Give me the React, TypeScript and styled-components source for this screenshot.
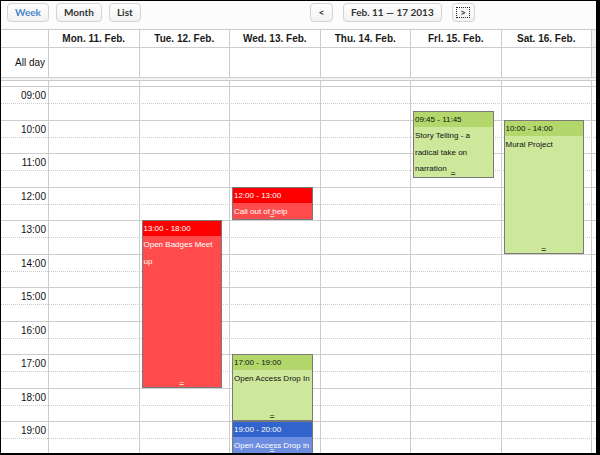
import React from 'react';
import styled, { createGlobalStyle } from 'styled-components';

const GlobalStyle = createGlobalStyle`
  html, body { margin: 0; padding: 0; background: #fff; }
  body { font-family: "Liberation Sans", Arial, sans-serif; }
`;

const COLS = '48px repeat(6, 1fr) 4px';
const HOUR = 33.5;
const OFFSET = 5;
const FIRST = 9;
const LINE = '#cccccc';

const yOf = (h: number) => Math.round(OFFSET + (h - FIRST) * HOUR);

type Tone = 'red' | 'green' | 'blue';
const tones: Record<Tone, { head: string; body: string; fg: string }> = {
  red: { head: '#ff0000', body: '#ff4b4b', fg: '#ffffff' },
  green: { head: '#b3d76b', body: '#cde79b', fg: '#111111' },
  blue: { head: '#3164cc', body: '#6d8de0', fg: '#ffffff' },
};

const days = ['Mon. 11. Feb.', 'Tue. 12. Feb.', 'Wed. 13. Feb.', 'Thu. 14. Feb.', 'Frl. 15. Feb.', 'Sat. 16. Feb.'];

type Ev = { day: number; start: number; end: number; time: string; title: string; tone: Tone };
const events: Ev[] = [
  { day: 1, start: 13, end: 18, time: '13:00 - 18:00', title: 'Open Badges Meet up', tone: 'red' },
  { day: 2, start: 12, end: 13, time: '12:00 - 13:00', title: 'Call out of help', tone: 'red' },
  { day: 2, start: 17, end: 19, time: '17:00 - 19:00', title: 'Open Access Drop In', tone: 'green' },
  { day: 2, start: 19, end: 20, time: '19:00 - 20:00', title: 'Open Access Drop in', tone: 'blue' },
  { day: 4, start: 9.75, end: 11.75, time: '09:45 - 11:45', title: 'Story Telling - a radical take on narration', tone: 'green' },
  { day: 5, start: 10, end: 14, time: '10:00 - 14:00', title: 'Mural Project', tone: 'green' },
];

const hours = [9, 10, 11, 12, 13, 14, 15, 16, 17, 18, 19, 20];

const Frame = styled.div`
  width: 600px;
  height: 455px;
  box-sizing: border-box;
  border-style: solid;
  border-color: #000;
  border-width: 1px 4px 2px 1px;
  background: #fff;
  display: flex;
  flex-direction: column;
  overflow: hidden;
`;

const Toolbar = styled.div`
  height: 28px;
  flex: none;
  box-sizing: border-box;
  padding: 2px 0 0 6px;
  display: flex;
  align-items: flex-start;
  background: #fcfcfc;
`;

const ViewGroup = styled.div`
  width: 303px;
  flex: none;
  display: flex;
  gap: 7px;
`;

const NavGroup = styled.div`
  display: flex;
  gap: 10px;
`;

const Button = styled.button<{ $active?: boolean; $w?: number }>`
  height: 19px;
  box-sizing: border-box;
  ${(p) => (p.$w ? `width: ${p.$w}px; padding: 0;` : 'padding: 0 7px;')}
  margin: 0;
  border: 1px solid #d4d4d4;
  border-radius: 4px;
  background: linear-gradient(#ffffff, #f2f2f2);
  font-family: "Lato", "Liberation Sans", sans-serif;
  font-weight: 700;
  font-size: 10px;
  line-height: 17px;
  color: ${(p) => (p.$active ? '#4a85c9' : '#333333')};
  display: flex;
  align-items: center;
  justify-content: center;
`;

const FocusRing = styled.span`
  display: flex;
  align-items: center;
  justify-content: center;
  width: 14px;
  height: 11px;
  border: 1px dotted #222;
  box-sizing: border-box;
  font-size: 10px;
`;

const HeaderRow = styled.div`
  flex: none;
  display: grid;
  grid-template-columns: ${COLS};
  height: 19px;
  box-sizing: border-box;
  border-top: 1px solid ${LINE};
  border-bottom: 1px solid ${LINE};
`;

const HeadCell = styled.div`
  border-right: 1px solid ${LINE};
  font-weight: bold;
  font-size: 10px;
  line-height: 17px;
  text-align: center;
  color: #1a1a1a;
  white-space: nowrap;
  overflow: hidden;
`;

const Gutter = styled.div`
  background: #f3f3f3;
`;

const AllDayRow = styled.div`
  flex: none;
  display: grid;
  grid-template-columns: ${COLS};
  height: 30px;
  box-sizing: border-box;
  border-bottom: 1px solid ${LINE};
`;

const AxisLabel = styled.div`
  border-right: 1px solid ${LINE};
  text-align: right;
  padding-right: 3px;
  font-size: 10px;
  line-height: 29px;
  color: #111;
`;

const Cell = styled.div`
  border-right: 1px solid ${LINE};
`;

const Divider = styled.div`
  flex: none;
  height: 3px;
  box-sizing: border-box;
  background: #f4f4f4;
  border-bottom: 1px solid ${LINE};
`;

const TimeGrid = styled.div`
  flex: 1;
  position: relative;
  overflow: hidden;
`;

const Rows = styled.div`
  display: flex;
  flex-direction: column;
`;

const LeadSlot = styled.div`
  height: ${OFFSET}px;
  flex: none;
`;

const HourRow = styled.div`
  flex: none;
  box-sizing: border-box;
  border-top: 1px solid ${LINE};
  display: flex;
  flex-direction: column;
`;

const TopHalf = styled.div`
  height: 16px;
  flex: none;
`;

const BottomHalf = styled.div`
  flex: 1;
  border-top: 1px dotted ${LINE};
`;

const TimeLabel = styled.div`
  width: 45px;
  text-align: right;
  font-size: 10px;
  line-height: 17px;
  color: #111;
`;

const Columns = styled.div`
  position: absolute;
  inset: 0;
  display: grid;
  grid-template-columns: ${COLS};
`;

const DayCol = styled.div`
  position: relative;
  border-right: 1px solid ${LINE};
`;

const EventBox = styled.div<{ $tone: Tone }>`
  position: absolute;
  left: 2px;
  right: 7px;
  box-sizing: border-box;
  border: 1px solid #7a7a7a;
  overflow: hidden;
  background: ${(p) => tones[p.$tone].body};
  color: ${(p) => tones[p.$tone].fg};
  font-size: 8px;
`;

const EventTime = styled.div<{ $tone: Tone }>`
  height: 15px;
  line-height: 15px;
  padding-left: 1px;
  background: ${(p) => tones[p.$tone].head};
  white-space: nowrap;
`;

const EventTitle = styled.div`
  line-height: 16.5px;
  padding: 1px 1px 0;
`;

const Handle = styled.div`
  position: absolute;
  left: 0;
  right: 0;
  bottom: 0;
  text-align: center;
  font-family: "DejaVu Sans Mono", monospace;
  font-size: 8px;
  line-height: 7px;
`;

export default function App() {
  return (
    <>
      <GlobalStyle />
      <Frame>
        <Toolbar>
          <ViewGroup>
            <Button $active>Week</Button>
            <Button>Month</Button>
            <Button>List</Button>
          </ViewGroup>
          <NavGroup>
            <Button $w={23}>&lt;</Button>
            <Button>Feb. 11 — 17 2013</Button>
            <Button $w={23}>
              <FocusRing>&gt;</FocusRing>
            </Button>
          </NavGroup>
        </Toolbar>
        <HeaderRow>
          <HeadCell />
          {days.map((d) => (
            <HeadCell key={d}>{d}</HeadCell>
          ))}
          <Gutter />
        </HeaderRow>
        <AllDayRow>
          <AxisLabel>All day</AxisLabel>
          {days.map((d) => (
            <Cell key={d} />
          ))}
          <Gutter />
        </AllDayRow>
        <Divider />
        <TimeGrid>
          <Rows>
            <LeadSlot />
            {hours.map((h) => (
              <HourRow key={h} style={{ height: yOf(h + 1) - yOf(h) }}>
                <TopHalf>
                  <TimeLabel>{String(h).padStart(2, '0')}:00</TimeLabel>
                </TopHalf>
                <BottomHalf />
              </HourRow>
            ))}
          </Rows>
          <Columns>
            <DayCol />
            {days.map((d, i) => (
              <DayCol key={d}>
                {events
                  .filter((e) => e.day === i)
                  .map((e) => (
                    <EventBox
                      key={e.time + e.title}
                      $tone={e.tone}
                      style={{ top: yOf(e.start), height: yOf(e.end) - yOf(e.start) }}
                    >
                      <EventTime $tone={e.tone}>{e.time}</EventTime>
                      <EventTitle>{e.title}</EventTitle>
                      <Handle>=</Handle>
                    </EventBox>
                  ))}
              </DayCol>
            ))}
            <div />
          </Columns>
        </TimeGrid>
      </Frame>
    </>
  );
}
